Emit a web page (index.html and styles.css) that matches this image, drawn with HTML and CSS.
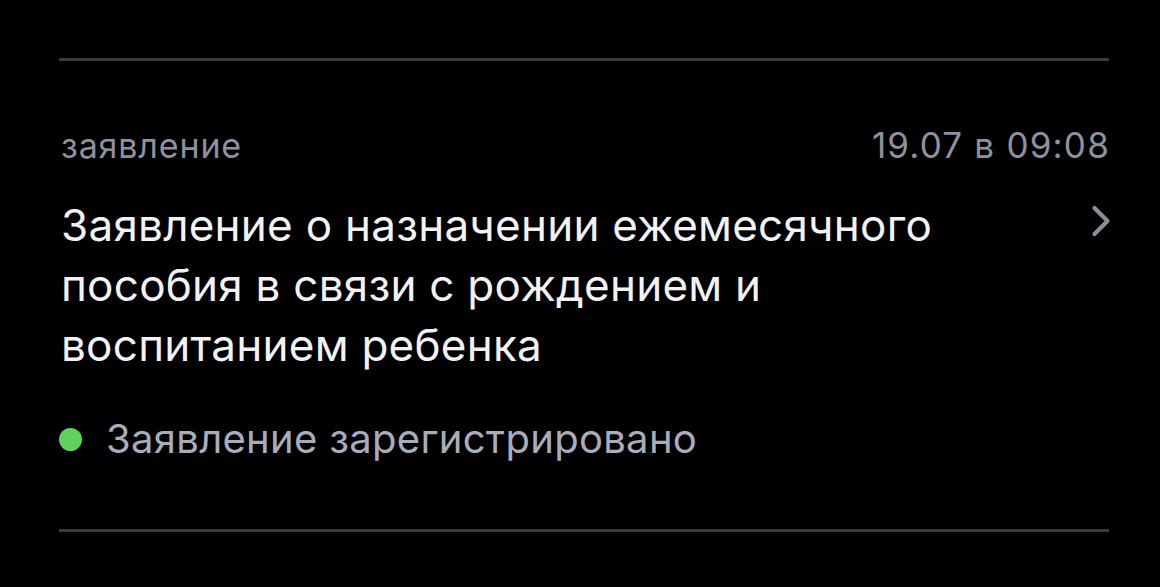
FILE: index.html
```html
<!DOCTYPE html>
<html lang="ru">
<head>
<meta charset="utf-8">
<link rel="stylesheet" href="styles.css">
</head>
<body>
<div class="page">
  <div class="divider"></div>
  <div class="card">
    <div class="meta">
      <span class="type">заявление</span>
      <span class="date">19.07 в 09:08</span>
    </div>
    <div class="main">
      <div class="title">Заявление о назначении ежемесячного пособия в связи с рождением и воспитанием ребенка</div>
      <svg class="chevron" width="20" height="32" viewBox="0 0 20 32"><path d="M3.5 3 L16.5 16 L3.5 29" fill="none" stroke="#8a8e9a" stroke-width="4.2" stroke-linecap="round" stroke-linejoin="round"/></svg>
    </div>
    <div class="status">
      <span class="dot"></span>
      <span class="status-text">Заявление зарегистрировано</span>
    </div>
  </div>
  <div class="divider"></div>
</div>
</body>
</html>
```
FILE: styles.css
```css
html, body {
  margin: 0;
  padding: 0;
  background: #000;
}
body {
  font-family: Inter, "Noto Sans", sans-serif;
  width: 1160px;
  height: 587px;
  overflow: hidden;
}
.page {
  padding: 58px 51px 0 59px;
}
.divider {
  height: 3px;
  background: #3a3a3f;
}
.card {
  padding: 62px 0 66px 2px;
}
.meta {
  display: flex;
  justify-content: space-between;
  align-items: baseline;
  font-size: 34px;
  line-height: 44px;
  color: #8e919e;
  letter-spacing: 0.85px;
}
.date {
  font-size: 35px;
  letter-spacing: 1.2px;
  margin-right: -1px;
}
.main {
  display: flex;
  justify-content: space-between;
  align-items: flex-start;
  margin-top: 27px;
}
.title {
  color: #f2f2f4;
  font-size: 44px;
  line-height: 60px;
  letter-spacing: 0.25px;
  width: 900px;
}
.chevron {
  margin-top: 10px;
  margin-right: -2px;
}
.status {
  display: flex;
  align-items: center;
  margin-top: 40px;
}
.dot {
  width: 23px;
  height: 23px;
  border-radius: 50%;
  background: #5ed15f;
  margin-left: -2px;
  margin-right: 24px;
}
.status-text {
  color: #a9adbb;
  font-size: 40px;
  line-height: 48px;
  letter-spacing: 0.3px;
}
```
